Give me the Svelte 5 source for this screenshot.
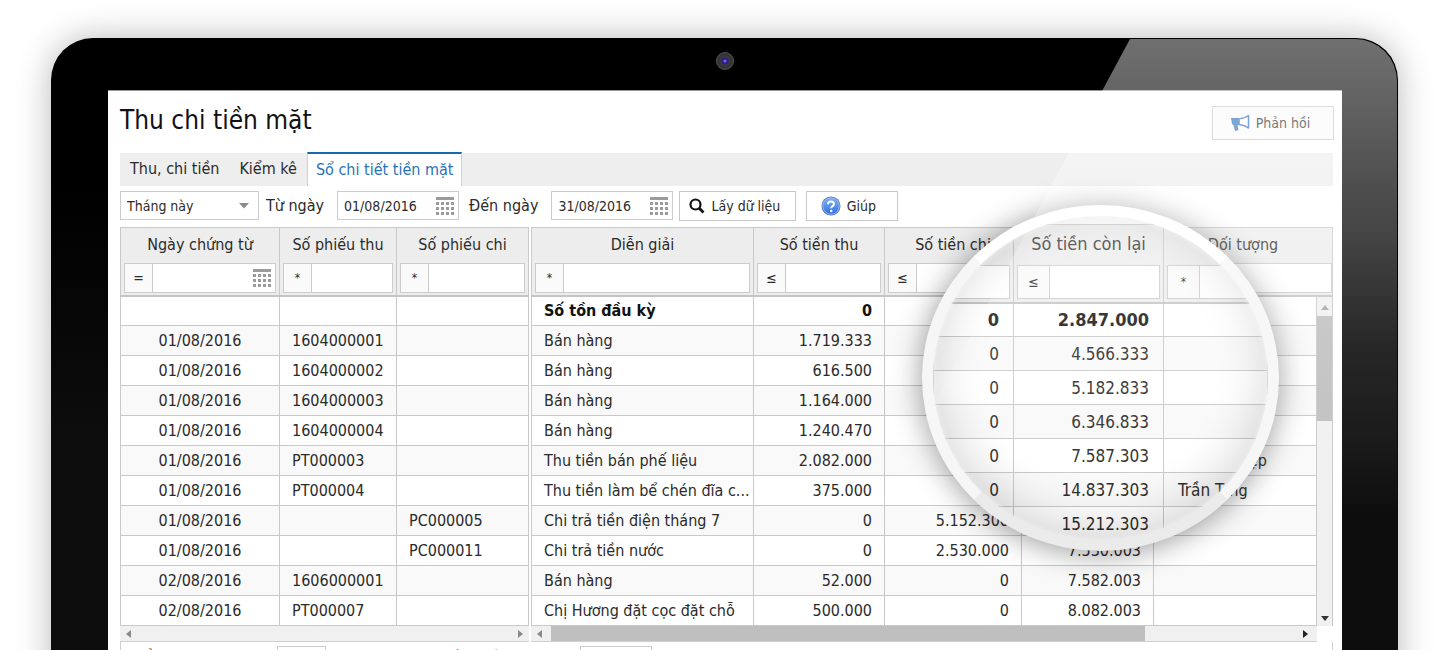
<script>
  const frozen = [
    ['', '', ''],
    ['01/08/2016', '1604000001', ''],
    ['01/08/2016', '1604000002', ''],
    ['01/08/2016', '1604000003', ''],
    ['01/08/2016', '1604000004', ''],
    ['01/08/2016', 'PT000003', ''],
    ['01/08/2016', 'PT000004', ''],
    ['01/08/2016', '', 'PC000005'],
    ['01/08/2016', '', 'PC000011'],
    ['02/08/2016', '1606000001', ''],
    ['02/08/2016', 'PT000007', '']
  ];
  // Amounts that the magnifier covers are listed in `zoomed` instead.
  const rows = [
    ['Số tồn đầu kỳ', '0', '', '', ''],
    ['Bán hàng', '1.719.333', '', '', ''],
    ['Bán hàng', '616.500', '', '', ''],
    ['Bán hàng', '1.164.000', '', '', ''],
    ['Bán hàng', '1.240.470', '', '', ''],
    ['Thu tiền bán phế liệu', '2.082.000', '', '', 'Doanh nghiệp'],
    ['Thu tiền làm bể chén đĩa c...', '375.000', '', '', 'Trần Hoàng'],
    ['Chi trả tiền điện tháng 7', '0', '5.152.300', '', ''],
    ['Chi trả tiền nước', '0', '2.530.000', '7.530.003', ''],
    ['Bán hàng', '52.000', '0', '7.582.003', ''],
    ['Chị Hương đặt cọc đặt chỗ', '500.000', '0', '8.082.003', '']
  ];
  const zoomed = [
    ['0', '2.847.000', ''],
    ['0', '4.566.333', ''],
    ['0', '5.182.833', ''],
    ['0', '6.346.833', ''],
    ['0', '7.587.303', ''],
    ['0', '14.837.303', 'Trần T'],
    ['', '15.212.303', '']
  ];
  const frozenHeads = [['Ngày chứng từ', '=', true], ['Số phiếu thu', '*'], ['Số phiếu chi', '*']];
  const heads = [['Diễn giải', '*'], ['Số tiền thu', '≤'], ['Số tiền chi', '≤'], ['', ''], ['Đối tượng', '']];
</script>

{#snippet calendar()}
  <svg class="cal" viewBox="0 0 18 18" aria-hidden="true">
    <rect width="18" height="3" />
    {#each [5, 10, 15] as y}
      {#each [0, 5, 10, 15] as x}
        <rect {x} {y} width="3" height="3" />
      {/each}
    {/each}
  </svg>
{/snippet}

{#snippet filter(name, op, cal)}
  <div class="filter">
    {#if op}<button class="op" class:star={op === '*'} aria-label={'Điều kiện ' + name}>{op}</button>{/if}
    <input type="text" aria-label={name} />
    {#if cal}{@render calendar()}{/if}
  </div>
{/snippet}

<div class="page">
  <div class="laptop">
    <div class="bezel-top"><span class="camera"></span></div>
    <main class="screen">
      <header class="title-row">
        <h1>Thu chi tiền mặt</h1>
        <button class="btn feedback">
          <svg viewBox="0 0 20 18" width="20" height="18" aria-hidden="true">
            <path d="M1 4 H9 V11 H7.500 L8.500 16 L5 17 L3.500 11 L2 10 Z" fill="#2f73bd" />
            <path d="M9 5 C13 4.500 16 3.500 18.500 1.500 V14 C16 12 13 11 9 10.500 Z" fill="#fff" stroke="#2f73bd" stroke-width="1.600" stroke-linejoin="round" />
          </svg>
          Phản hồi
        </button>
      </header>

      <nav class="tabs">
        <a href="#thu-chi">Thu, chi tiền</a>
        <a href="#kiem-ke">Kiểm kê</a>
        <a href="#so-chi-tiet" class="active" aria-current="page">Sổ chi tiết tiền mặt</a>
      </nav>

      <div class="toolbar">
        <span class="select">
          <select aria-label="Kỳ"><option>Tháng này</option></select>
          <svg viewBox="0 0 10 6" width="10" height="6" aria-hidden="true"><path d="M0 0H10L5 5.500Z" fill="#8a8a8a" /></svg>
        </span>
        <label for="from">Từ ngày</label>
        <span class="date"><input id="from" type="text" value="01/08/2016" />{@render calendar()}</span>
        <label for="to">Đến ngày</label>
        <span class="date"><input id="to" type="text" value="31/08/2016" />{@render calendar()}</span>
        <button class="btn load">
          <svg viewBox="0 0 16 16" width="16" height="16" aria-hidden="true">
            <circle cx="6.500" cy="6.500" r="5" fill="none" stroke="#111" stroke-width="2.200" />
            <path d="M10 10L14.500 14.500" stroke="#111" stroke-width="2.800" />
          </svg>
          Lấy dữ liệu
        </button>
        <button class="btn help">
          <svg viewBox="0 0 20 20" width="20" height="20" aria-hidden="true">
            <defs>
              <linearGradient id="helpFill" x1="0" y1="0" x2="0" y2="1">
                <stop offset="0" stop-color="#82b0f5" />
                <stop offset="1" stop-color="#2e6fe0" />
              </linearGradient>
            </defs>
            <circle cx="10" cy="10" r="9.500" fill="#4a70b8" />
            <circle cx="10" cy="10" r="8.300" fill="url(#helpFill)" stroke="#a9c6f5" stroke-width="0.800" />
            <path d="M7 8.200C7 4.600 13 4.600 13 8C13 10 10.200 9.900 10.200 12.200" fill="none" stroke="#fff" stroke-width="2" />
            <circle cx="10.200" cy="15" r="1.300" fill="#fff" />
          </svg>
          Giúp
        </button>
      </div>

      <div class="grid">
        <section class="pane frozen">
          <table>
            <colgroup><col class="w-date" /><col class="w-in" /><col /></colgroup>
            <thead>
              <tr>{#each frozenHeads as [h]}<th>{h}</th>{/each}</tr>
              <tr class="filters">{#each frozenHeads as [h, op, cal]}<td>{@render filter(h, op, cal)}</td>{/each}</tr>
            </thead>
            <tbody>
              {#each frozen as r}
                <tr><td class="center">{r[0]}</td><td>{r[1]}</td><td>{r[2]}</td></tr>
              {/each}
            </tbody>
          </table>
          <div class="hscroll"><i class="arrow left"></i><i class="arrow right"></i></div>
        </section>
        <section class="pane main">
          <table>
            <colgroup><col class="w-desc" /><col class="w-num" /><col class="w-out" /><col class="w-left" /><col /><col class="w-bar" /></colgroup>
            <thead>
              <tr>{#each heads as [h], i}<th colspan={i === 4 ? 2 : 1}>{h}</th>{/each}</tr>
              <tr class="filters">{#each heads as [h, op], i}<td class:flush={i === 4} colspan={i === 4 ? 2 : 1}>{@render filter(h, op, false)}</td>{/each}</tr>
            </thead>
            <tbody>
              {#each rows as r, i}
                <tr class:opening={i === 0}>
                  <td>{r[0]}</td><td class="num">{r[1]}</td><td class="num">{r[2]}</td><td class="num">{r[3]}</td><td>{r[4]}</td>
                  {#if i === 0}
                    <td class="bar" rowspan={rows.length}>
                      <div class="vscroll"><i class="arrow up"></i><span class="thumb"></span><i class="arrow down"></i></div>
                    </td>
                  {/if}
                </tr>
              {/each}
            </tbody>
          </table>
          <div class="hscroll wide"><i class="arrow left"></i><span class="thumb"></span><i class="arrow right dark"></i></div>
        </section>
      </div>

      <footer class="pager">
        <label for="size">Hiển thị</label>
        <input id="size" class="size" type="text" />
        <span class="pages">Trang đầu Trước</span>
        <input class="page-no" type="text" aria-label="Trang" />
      </footer>

      <div class="lens">
        <table>
          <colgroup><col class="z-out" /><col class="z-left" /><col /></colgroup>
          <thead>
            <tr><th></th><th>Số tiền còn lại</th><th></th></tr>
            <tr class="filters">
              <td>{@render filter('Số tiền chi, phóng to', '', false)}</td>
              <td>{@render filter('Số tiền còn lại, phóng to', '≤', false)}</td>
              <td class="flush">{@render filter('Đối tượng, phóng to', '*', false)}</td>
            </tr>
          </thead>
          <tbody>
            {#each zoomed as r, i}
              <tr class:opening={i === 0}><td class="num">{r[0]}</td><td class="num">{r[1]}</td><td>{r[2]}</td></tr>
            {/each}
          </tbody>
        </table>
      </div>
    </main>
    <div class="gloss"></div>
  </div>
</div>

<style>
  :global(body) { background: #fff; }
  * { box-sizing: border-box; }
  .page {
    height: 100vh;
    overflow: hidden;
    padding: 38px 52px 0 51px;
    font-family: "DejaVu Sans Condensed", "Noto Sans", sans-serif;
    font-size: 16px;
    line-height: 20px;
    color: #2b2b2b;
  }
  button, input, select { font: inherit; color: inherit; margin: 0; border-radius: 0; }
  .laptop {
    position: relative;
    padding: 0 56px 40px 57px;
    border-radius: 42px 42px 0 0;
    background: linear-gradient(#000 150px, #0d0d0d 400px);
    box-shadow: 0 0 34px rgba(0, 0, 0, 0.28);
  }
  .bezel-top { height: 52px; display: flex; justify-content: center; padding-top: 14px; }
  .camera {
    width: 18px;
    height: 18px;
    border-radius: 50%;
    background: radial-gradient(circle, #7a5cf0 0 1px, #2a1d80 2px 3px, #3a3a40 4px, #333 7px, #555 9px);
  }
  .screen { position: relative; background: #fff; border-top: 1px solid #999; padding: 0 8px 30px 12px; }

  .title-row { display: flex; justify-content: space-between; align-items: flex-start; height: 62px; padding-top: 12px; }
  h1 { margin: 0; font-size: 26px; line-height: 34px; font-weight: 400; color: #111; }
  .btn {
    display: flex;
    align-items: center;
    justify-content: center;
    gap: 6px;
    height: 30px;
    padding: 0 6px 0 0;
    border: 1px solid #c8c8c8;
    background: #fff;
    font-size: 14px;
  }
  .feedback { width: 122px; height: 34px; margin-top: 3px; background: #fafafa; }

  .tabs { display: flex; height: 33px; margin-right: 1px; background: #eee; }
  .tabs a { display: block; padding: 6px 10px 0; color: #2b2b2b; text-decoration: none; }
  .tabs .active {
    margin-top: -1px;
    padding: 6px 8px 0;
    background: #fff;
    border: solid #d0d0d0;
    border-width: 2px 1px 0;
    border-top-color: #1769ad;
    color: #2873b8;
  }

  .toolbar { display: flex; align-items: flex-start; padding-top: 5px; height: 41px; }
  .toolbar label { padding-top: 5px; }
  .select, .date {
    display: flex;
    align-items: center;
    height: 29px;
    border: 1px solid #ccc;
    background: #fff;
    font-size: 14px;
  }
  .select { width: 139px; margin-right: 7px; padding-right: 9px; }
  .select select { flex: 1; min-width: 0; padding: 0 6px; border: 0; background: none; appearance: none; }
  .date { width: 122px; margin: 0 10px 0 13px; padding-right: 4px; }
  .date input { flex: 1; min-width: 0; padding: 0 0 0 6px; border: 0; background: none; }
  .toolbar .date + .btn { margin-left: -4px; }
  .load { width: 117px; }
  .help { width: 92px; margin-left: 10px; padding-right: 8px; }
  .cal { flex: none; width: 18px; height: 18px; fill: #9b9b9b; }

  .grid { display: flex; gap: 2px; margin-right: 1px; }
  .pane { min-width: 0; }
  .frozen { flex: 0 0 409px; }
  .main { flex: 1; }
  table { width: 100%; table-layout: fixed; border-collapse: collapse; }
  .w-date { width: 159px; }
  .w-in { width: 117px; }
  .w-desc { width: 222px; }
  .w-num { width: 131px; }
  .w-out { width: 137px; }
  .w-left { width: 132px; }
  .w-bar { width: 16px; }
  th, td { padding: 0 12px; border: 1px solid #c9c9c9; white-space: nowrap; overflow: hidden; }
  th { height: 35px; padding: 0; font-weight: 400; background: #ededed; border-bottom: 0; }
  .filters td { height: 33px; padding: 0 3px 2px; background: #ededed; border-top: 0; border-bottom: 2px solid #c4c4c4; }
  .filters td.flush { padding-right: 0; }
  tbody td { height: 30px; padding-top: 1px; }
  tbody tr:nth-child(even) td { background: #f9f9f9; }
  .center { text-align: center; }
  .num { text-align: right; }
  .opening td { font-weight: 700; color: #111; }
  .filter { display: flex; align-items: center; height: 30px; border: 1px solid #ccc; background: #fff; }
  .filter input { flex: 1; min-width: 0; height: 100%; padding: 0 4px; border: 0; background: none; }
  .filter .cal { margin-right: 4px; }
  .op {
    flex: none;
    width: 28px;
    height: 100%;
    padding: 0;
    border: 0;
    border-right: 1px solid #ccc;
    background: #fafafa;
    font-size: 14px;
    line-height: 20px;
  }
  .op.star { font-size: 12px; }

  tbody td.bar { padding: 0; border-bottom: 0; vertical-align: top; }
  .vscroll { display: flex; flex-direction: column; align-items: center; height: 329px; padding: 8px 0 5px; background: #f0f0f0; }
  .vscroll .thumb { width: 100%; height: 105px; margin: 6px 0 auto; background: #bfbfbf; }
  .arrow { width: 0; height: 0; border: 4px solid transparent; }
  .up { border-width: 0 4px 5px; border-bottom-color: #a5a5a5; }
  .down { border-width: 5px 4px 0; border-top-color: #333; }
  .left { border-width: 4px 5px 4px 0; border-right-color: #8a8a8a; }
  .right { border-width: 4px 0 4px 5px; border-left-color: #8a8a8a; }
  .right.dark { border-left-color: #222; }
  .hscroll {
    display: flex;
    align-items: center;
    justify-content: space-between;
    height: 16px;
    padding: 0 6px;
    background: #f0f0f0;
    border-bottom: 1px solid #d0d0d0;
  }
  .wide { margin-right: 16px; padding-right: 9px; }
  .wide .thumb { width: 77%; height: 100%; margin: 0 auto 0 9px; background: #bfbfbf; }

  .pager {
    display: flex;
    align-items: flex-start;
    margin-right: 1px;
    padding: 4px 10px 0;
    border: solid #d0d0d0;
    border-width: 0 1px;
    color: #555;
    font-size: 14px;
  }
  .pager label { width: 146px; }
  .pager input { height: 28px; border: 1px solid #ccc; background: #fff; }
  .pager .size { width: 49px; }
  .pages { width: 254px; padding-left: 80px; white-space: nowrap; }
  .pager .page-no { width: 72px; }

  .lens {
    position: absolute;
    top: 114px;
    right: 63px;
    width: 357px;
    height: 346px;
    overflow: hidden;
    padding-top: 8px;
    border-radius: 50%;
    border: 11px solid #fff;
    border-color: #fff #f6f6f6 #ebebeb;
    background: #fff;
    box-shadow: 0 2px 30px rgba(0, 0, 0, 0.42);
    font-size: 17px;
  }
  .lens::after {
    content: "";
    position: absolute;
    inset: -1px;
    border-radius: 50%;
    pointer-events: none;
    box-shadow: inset 0 0 5px 1px rgba(246, 246, 246, 0.9), inset 0 -10px 50px rgba(0, 0, 0, 0.18);
  }
  .z-out { width: 80px; }
  .z-left { width: 150px; }
  .lens th { height: 39px; font-size: 18px; }
  .lens .filters td { height: 39px; }
  .lens tbody td { height: 34px; padding: 1px 14px 0; }
  .lens .opening td { font-size: 18px; }
  .lens .filter { height: 34px; }
  .lens .op { width: 32px; }

  .gloss {
    position: absolute;
    inset: 1px 1px 0 0;
    border-radius: 0 42px 0 0;
    pointer-events: none;
    background: linear-gradient(rgba(255, 255, 255, 0.44), rgba(255, 255, 255, 0.39) 60px, rgba(255, 255, 255, 0.26) 200px, rgba(255, 255, 255, 0.12) 310px, rgba(255, 255, 255, 0) 480px);
    clip-path: polygon(calc(100% - 267px) 0, 100% 0, 100% 100%, calc(100% - 596px) 612px);
  }
</style>
